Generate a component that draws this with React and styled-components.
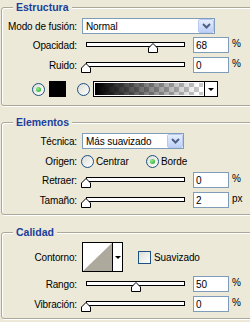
import React from "react";
import styled, { createGlobalStyle } from "styled-components";

const Global = createGlobalStyle`
  html, body { margin: 0; padding: 0; background: #ECE9D8; overflow: hidden; }
  body { font-family: "Liberation Sans", Arial, sans-serif; font-size: 10px; color: #000; }
`;

const Panel = styled.div`
  width: 262px;
  height: 322px;
  box-sizing: border-box;
  padding: 7px 0 0 1px;
  display: flex;
  flex-direction: column;
`;

const Group = styled.section`
  position: relative;
  border: 1px solid #ACA899;
  border-radius: 3px;
  box-shadow: inset 1px 1px 0 #fff, 1px 1px 0 #fff;
  padding: ${(p) => p.$pad};
  margin-top: ${(p) => p.$mt || 0}px;
  display: flex;
  flex-direction: column;
`;

const Legend = styled.h3`
  position: absolute;
  top: -7px;
  left: 11px;
  margin: 0;
  padding: 0 3px;
  background: #ECE9D8;
  font: bold 10.5px/13px "Liberation Sans", Arial, sans-serif;
  color: #1B3E9D;
`;

const Row = styled.div`
  display: flex;
  align-items: center;
  height: ${(p) => p.$h || 16}px;
  margin-top: ${(p) => p.$mt || 0}px;
`;

const Label = styled.span`
  flex: none;
  width: 75px;
  margin-right: 4px;
  text-align: right;
  white-space: nowrap;
  letter-spacing: -0.15px;
`;

const Select = styled.div`
  flex: none;
  width: ${(p) => p.$w}px;
  height: 16px;
  box-sizing: border-box;
  margin-left: 1px;
  padding-left: 3px;
  border: 1px solid #7F9DB9;
  background: #fff;
  display: flex;
  align-items: center;
  justify-content: space-between;
  letter-spacing: -0.1px;
`;

const DropBtn = styled.span`
  width: 16px;
  height: 14px;
  box-sizing: border-box;
  border: 1px solid #B7C9F2;
  border-radius: 2px;
  background: linear-gradient(#E6EEFE, #BDD0F8);
  display: flex;
  align-items: center;
  justify-content: center;
`;

const SliderWrap = styled.div`
  position: relative;
  flex: none;
  width: 105px;
  height: 16px;
`;

const Track = styled.div`
  position: absolute;
  left: 5px;
  top: 5px;
  width: 99px;
  height: 5px;
  box-sizing: border-box;
  border: 1px solid #000;
  background: #fff;
`;

const Thumb = styled.svg`
  position: absolute;
  top: 6px;
  width: 10px;
  height: 10px;
`;

const NumBox = styled.input`
  flex: none;
  width: 36px;
  height: 16px;
  box-sizing: border-box;
  margin: 0 0 0 7px;
  padding: 0 0 0 2px;
  border: 1px solid #7F9DB9;
  background: #fff;
  font: 10px/14px "Liberation Sans", Arial, sans-serif;
  color: #000;
  outline: none;
`;

const Unit = styled.span`
  align-self: flex-start;
  margin-left: 3px;
  line-height: 14px;
`;

const Radio = styled.span`
  flex: none;
  width: 13px;
  height: 13px;
  box-sizing: border-box;
  margin-left: ${(p) => p.$ml || 0}px;
  border-radius: 50%;
  border: 1px solid #1C5180;
  background: linear-gradient(135deg, #DCDCD7, #fff);
  display: inline-flex;
  align-items: center;
  justify-content: center;
  &::after {
    content: "";
    display: ${(p) => (p.$on ? "block" : "none")};
    width: 5px;
    height: 5px;
    border-radius: 50%;
    background: radial-gradient(circle at 35% 35%, #93EC8F, #21A121);
  }
`;

const Option = styled.span`
  flex: none;
  display: flex;
  align-items: center;
  width: ${(p) => (p.$w ? `${p.$w}px` : "auto")};
`;

const OptText = styled.span`
  margin-left: ${(p) => p.$ml || 2}px;
  letter-spacing: -0.1px;
`;

const Swatch = styled.span`
  flex: none;
  width: 17px;
  height: 16px;
  margin-left: 4px;
  background: #000;
`;

const GradBox = styled.div`
  flex: none;
  display: flex;
  width: 125px;
  height: 16px;
  box-sizing: border-box;
  margin-left: 3px;
  border: 1px solid #000;
`;

const GradFill = styled.div`
  flex: 1;
  box-shadow: inset 0 0 0 1px #fff;
  background-image: linear-gradient(to right, #000 2%, rgba(0, 0, 0, 0) 95%),
    conic-gradient(#C8C8C8 25%, #fff 0 50%, #C8C8C8 0 75%, #fff 0);
  background-size: 100% 100%, 10px 10px;
  border-right: 1px solid #000;
`;

const ArrowCell = styled.div`
  flex: none;
  width: ${(p) => p.$w}px;
  background: #fff;
  display: flex;
  align-items: center;
  justify-content: center;
  &::after {
    content: "";
    border-left: 3px solid transparent;
    border-right: 3px solid transparent;
    border-top: 3px solid #000;
  }
`;

const ContourBox = styled.div`
  flex: none;
  display: flex;
  width: 41px;
  height: 30px;
  box-sizing: border-box;
  margin-left: 1px;
  border: 1px solid #000;
`;

const ContourThumb = styled.svg`
  flex: none;
  width: 29px;
  height: 28px;
  border-right: 1px solid #000;
  display: block;
`;

const Check = styled.span`
  flex: none;
  width: 13px;
  height: 13px;
  box-sizing: border-box;
  margin-left: 15px;
  border: 1px solid #1C5180;
  background: linear-gradient(135deg, #DCDCD7, #fff);
`;

function Chevron() {
  return (
    <svg width="9" height="6" viewBox="0 0 9 6">
      <polyline points="1,1 4.5,4.5 8,1" fill="none" stroke="#4D6185" strokeWidth="2" />
    </svg>
  );
}

function Slider({ label, value, unit }) {
  return (
    <Row $mt={label.mt}>
      <Label>{label.text}</Label>
      <SliderWrap>
        <Track />
        <Thumb viewBox="0 0 10 10" style={{ left: `${Math.round(value * 0.99)}px` }}>
          <path d="M5 0.5 L9.5 5 V9.5 H0.5 V5 Z" fill="#fff" stroke="#000" strokeWidth="1" />
        </Thumb>
      </SliderWrap>
      <NumBox readOnly value={String(value === null ? "" : label.shown)} />
      <Unit>{unit}</Unit>
    </Row>
  );
}

export default function App() {
  return (
    <>
      <Global />
      <Panel>
        <Group $pad="10px 0 8px">
          <Legend>Estructura</Legend>
          <Row>
            <Label>Modo de fusión:</Label>
            <Select $w={133}>
              Normal
              <DropBtn><Chevron /></DropBtn>
            </Select>
          </Row>
          <Slider label={{ text: "Opacidad:", mt: 3, shown: "68" }} value={68} unit="%" />
          <Slider label={{ text: "Ruido:", mt: 4, shown: "0" }} value={0} unit="%" />
          <Row $mt={8}>
            <Radio $ml={30} $on />
            <Swatch />
            <Radio $ml={11} />
            <GradBox>
              <GradFill />
              <ArrowCell $w={12} />
            </GradBox>
          </Row>
        </Group>

        <Group $pad="10px 0 6px" $mt={16}>
          <Legend>Elementos</Legend>
          <Row>
            <Label>Técnica:</Label>
            <Select $w={102}>
              Más suavizado
              <DropBtn><Chevron /></DropBtn>
            </Select>
          </Row>
          <Row $mt={4}>
            <Label>Origen:</Label>
            <Option $w={65}>
              <Radio />
              <OptText>Centrar</OptText>
            </Option>
            <Option>
              <Radio $on />
              <OptText>Borde</OptText>
            </Option>
          </Row>
          <Slider label={{ text: "Retraer:", mt: 3, shown: "0" }} value={0} unit="%" />
          <Slider label={{ text: "Tamaño:", mt: 4, shown: "2" }} value={0} unit="px" />
        </Group>

        <Group $pad="9px 0 6px" $mt={17}>
          <Legend>Calidad</Legend>
          <Row $h={30}>
            <Label>Contorno:</Label>
            <ContourBox>
              <ContourThumb viewBox="0 0 29 28">
                <rect width="29" height="28" fill="#fff" />
                <polygon points="0,28 29,0 29,28" fill="#ADA99C" />
              </ContourThumb>
              <ArrowCell $w={9} />
            </ContourBox>
            <Check />
            <OptText $ml={3}>Suavizado</OptText>
          </Row>
          <Slider label={{ text: "Rango:", mt: 4, shown: "50" }} value={50} unit="%" />
          <Slider label={{ text: "Vibración:", mt: 4, shown: "0" }} value={0} unit="%" />
        </Group>
      </Panel>
    </>
  );
}
